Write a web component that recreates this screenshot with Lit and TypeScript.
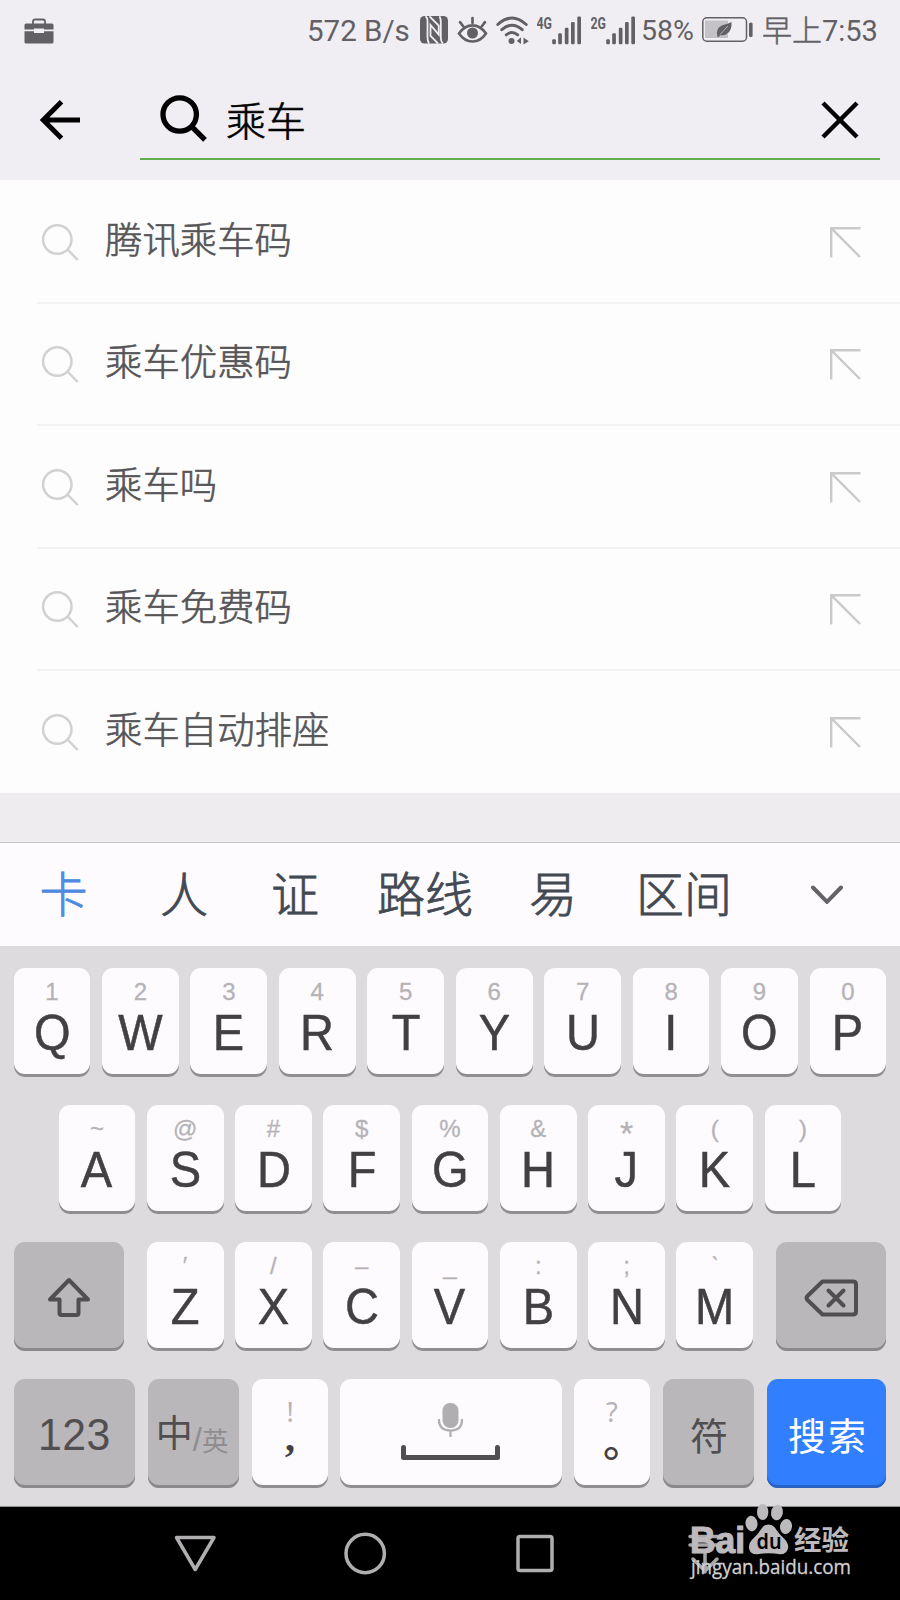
import { LitElement, html, css, svg } from "lit";
import { customElement, property } from "lit/decorators.js";
import { classMap } from "lit/directives/class-map.js";

const CJK = css`"Noto Sans CJK SC", sans-serif`;

@customElement("status-bar")
class StatusBar extends LitElement {
  static styles = css`
    :host { display: flex; align-items: center; height: 60px; padding: 0 21px 0 24px; box-sizing: border-box; color: #626064; font: 29.5px/60px Roboto, ${CJK}; white-space: nowrap; }
    svg { display: block; flex: none; }
    .case { margin-right: auto; margin-top: 2px; }
    .speed { width: 113px; padding-top: 2px; }
    .nfc { margin-right: 9px; }
    .eye { margin-right: 8px; }
    .wifi { margin-right: 8px; }
    .sig { margin-right: 10px; }
    .last { margin-right: 6px; }
    .pct { width: 61px; padding-top: 2px; font-size: 28.5px; }
    .batt { margin-right: 9px; }
    .time { width: 117px; padding-top: 2px; font-size: 29px; display: flex; }
    .zh { font: 300 30px/54px ${CJK}; -webkit-text-stroke: .5px #626064; }
  `;
  signal(label: string, cls: string) {
    return html`<svg class=${cls} width="44" height="30" viewBox="0 0 44 30" fill="#626064">
      <text x="-.5" y="13.500" font-family="Roboto" font-weight="700" font-size="16.500" textLength="15.500" lengthAdjust="spacingAndGlyphs">${label}</text>
      ${[[15.2, 24.3], [21.2, 18.3], [27.8, 12.7], [34, 7], [40.3, 1.5]].map(([x, y]) => svg`<rect x=${x} y=${y} width="3.7" height=${29.3 - y} rx="1.2"/>`)}
    </svg>`;
  }
  render() {
    return html`
      <svg class="case" width="30" height="28" viewBox="0 0 30 28"><path d="M9 7V4.500q0-2 2-2h8q2 0 2 2V7" fill="none" stroke="#626064" stroke-width="1.800"/><path d="M2 6.500h26q1.500 0 1.500 1.500v4.500H20v-1H10v1H.5V8Q.5 6.500 2 6.500ZM.5 14.300H10V16h10v-1.700h9.500V25q0 1.500-1.500 1.500H2Q.5 26.500.5 25Z" fill="#626064"/></svg>
      <span class="speed">572 B/s</span>
      <svg class="nfc" width="28" height="28" viewBox="0 0 28 28"><rect width="28" height="27.500" rx="4.500" fill="#626064"/><path d="M5.500.3Q7.800 2 7.500 5v16q0 4 1.500 6.500M19.500.3Q21 3 20.800 7v15q0 3 2 5.500M18 27.500L10.500 20V9L18.700 18.500V9.500L9.500 .3" fill="none" stroke="#f0eef3" stroke-width="1.800"/></svg>
      <svg class="eye" width="31" height="28" viewBox="0 0 30 28" fill="none" stroke="#626064" stroke-width="2.700" stroke-linecap="round"><path d="M1.500 17.500Q7 9.300 15 9.300t13.500 8.200Q23 25.500 15 25.500T1.500 17.500ZM15 7V2M5.500 10L2.500 6.200M24.500 10l3-3.800"/><circle cx="15" cy="17" r="5.500" fill="#626064" stroke="none"/></svg>
      <svg class="wifi" width="33" height="29" viewBox="0 0 33 29"><g fill="none" stroke="#626064" stroke-width="3" stroke-linecap="round"><path d="M1.800 8.500q14.200-13 28.400 0M5.800 13.700q10.200-9 20.400 0M10.300 18.800q5.700-4.700 11.400 0"/></g><circle cx="15.500" cy="25" r="3" fill="#626064"/><path d="M20.800 25l4.200-3.800V28ZM27.500 21.500l5.300 3.700-5.300 3.300Z" fill="#626064"/></svg>
      ${this.signal("4G", "sig")}
      ${this.signal("2G", "last")}
      <span class="pct">58%</span>
      <svg class="batt" width="51" height="26" viewBox="0 0 51 26"><rect x=".8" y=".8" width="43.700" height="23.400" rx="4" fill="none" stroke="#626064" stroke-width="1.500"/><rect x="3" y="3.500" width="23" height="17.500" fill="#c4c2c6"/><path d="M15.500 20Q13 10.500 21 8q5-.8 8.500-3Q30 12 26.500 15.500q-3.500 3.500-8 2.500l-2 2Z" fill="#626064"/><path d="M18 17.500L26 9" stroke="#c4c2c6" stroke-width=".8"/><rect x="47" y="5.500" width="3.600" height="14.500" rx="1.500" fill="#626064"/></svg>
      <span class="time"><span class="zh">早上</span><span>7:53</span></span>
    `;
  }
}

@customElement("search-bar")
class SearchBar extends LitElement {
  static styles = css`
    :host { display: flex; height: 120px; padding: 0 20px 20px 40px; box-sizing: border-box; align-items: stretch; }
    .back { align-self: center; margin: 20px 60px 0 0; flex: none; }
    .field { flex: 1; display: flex; align-items: center; border-bottom: 2px solid #62ac50; padding: 18px 21px 0 20px; box-sizing: border-box; }
    .query { flex: 1; margin: 0 0 0 19px; color: #000; font: 300 40px/60px ${CJK}; padding-top: 2px; -webkit-text-stroke: .6px #000; }
    .clear { margin-top: 4px; }
  `;
  render() {
    return html`
      <svg class="back" width="40" height="40" viewBox="0 0 40 40" fill="none" stroke="#000" stroke-width="5"><path d="M40 20H4M21.500 1.800L3.300 20l18.200 18.200"/></svg>
      <div class="field">
        <svg width="47" height="47" viewBox="0 0 47 47" fill="none" stroke="#000" stroke-width="5.300"><circle cx="19.700" cy="19.500" r="16.700"/><path d="M31.500 31.300L45 44.800"/></svg>
        <span class="query">乘车</span>
        <svg class="clear" width="38" height="38" viewBox="0 0 38 38" stroke="#000" stroke-width="4.500"><path d="M2 2l34 34M36 2L2 36"/></svg>
      </div>
    `;
  }
}

@customElement("suggestion-row")
class SuggestionRow extends LitElement {
  @property() text = "";
  @property({ type: Boolean }) last = false;
  static styles = css`
    :host { display: block; height: 122.500px; padding-left: 37px; box-sizing: border-box; }
    .row { height: 123.500px; box-sizing: border-box; display: flex; align-items: center; border-bottom: 2px solid #f2f1f3; padding: 2px 39px 0 4px; }
    .end { border-bottom-color: transparent; }
    .text { flex: 1; margin: -8px 0 0 26px; color: #565557; font: 300 37.400px/60px ${CJK}; -webkit-text-stroke: .6px #565557; }
  `;
  render() {
    return html`<div class=${classMap({ row: true, end: this.last })}>
      <svg width="38" height="38" viewBox="0 0 38 38" fill="none" stroke="#d2d0d3" stroke-width="2.500"><circle cx="16.300" cy="16.500" r="14.200"/><path d="M26.500 26.500L36.700 37"/></svg>
      <span class="text">${this.text}</span>
      <svg width="32" height="32" viewBox="0 0 32 32" fill="none" stroke="#cbcacb" stroke-width="2.400"><path d="M31.500 2.200H2.200V31.500M2.200 2.200L31 31"/></svg>
    </div>`;
  }
}

@customElement("key-cap")
class KeyCap extends LitElement {
  @property() label = "";
  @property() hint = "";
  @property() tone = "light";
  static styles = css`
    :host { display: block; flex: 0 0 auto; width: 76.800px; height: 109px; }
    .cap { height: 100%; box-sizing: border-box; border-radius: 11px; background: #fdfbfe; box-shadow: inset 0 -3px 0 #908e91; color: #424042; display: flex; flex-direction: column; align-items: center; font-family: "Liberation Sans", ${CJK}; }
    .dark { background: #b9b7ba; box-shadow: inset 0 -3px 0 #8a888b; justify-content: center; color: #504e51; padding-top: 4px; }
    .blue { background: #317eff; box-shadow: inset 0 -3px 0 #2a62c4; justify-content: center; color: #fff; padding-top: 4px; }
    .hint { height: 24px; margin-top: 11.500px; font-size: 24px; line-height: 25px; color: #b5b3b6; -webkit-text-stroke: .3px #b5b3b6; }
    .label { font-size: 49.500px; line-height: 59px; transform: scaleX(.95); -webkit-text-stroke: .5px #424042; }
    .star { font-size: 34px; line-height: 35px; }
  `;
  render() {
    return html`<div class=${classMap({ cap: true, dark: this.tone === "dark", blue: this.tone === "blue" })}>
      ${this.hint ? html`<span class=${classMap({ hint: true, star: this.hint === "*" })}>${this.hint}</span>` : ""}
      ${this.label ? html`<span class="label">${this.label}</span>` : ""}
      <slot></slot>
    </div>`;
  }
}

@customElement("soft-keyboard")
class SoftKeyboard extends LitElement {
  static styles = css`
    :host { display: flex; flex-direction: column; gap: 28px; height: 561px; padding: 22px 13.500px 0; box-sizing: border-box; background: #dddbde; border-bottom: 1px solid #8d8b8e; }
    .row { display: flex; justify-content: space-between; }
    .second { padding: 0 45px; }
    .third { gap: 11.500px; justify-content: center; }
    .fn { width: 110.500px; }
    .shift { margin-right: 11px; }
    .del { margin-left: 11px; }
    .num { width: 121px; }
    .mid { width: 91px; }
    .space { width: 222px; margin: 0 -1.500px; }
    .search { width: 119px; }
    .n123 { font-size: 45px; line-height: 60px; letter-spacing: .5px; transform: scaleX(.95); }
    .lang { display: flex; align-items: baseline; font: 400 37px/60px ${CJK}; white-space: nowrap; margin: -3px 0 0 -2px; }
    .small { font: 400 26.500px/60px ${CJK}; color: #8f8d90; position: relative; top: 4px; }
    .slash { font: 400 33px/40px "Liberation Sans", sans-serif; color: #8f8d90; position: relative; top: 4px; }
    .fu { font: 400 38px/60px ${CJK}; margin-top: -3px; }
    .go { font: 400 38px/60px ${CJK}; letter-spacing: 2px; margin: -3px 0 0 2px; }
    .punct { display: flex; flex-direction: column; align-items: center; padding-top: 18px; }
    .mark { font: 400 27px/30px "Noto Sans", sans-serif; color: #b5b3b6; }
    .comma { font: 700 40px/34px "Liberation Serif", serif; color: #424042; margin-top: -6px; }
    .stop { font: 500 42px/34px ${CJK}; color: #424042; margin: -5px 0 0 24px; }
    .spacer { margin-top: 24px; }
  `;
  keys(labels: string, hints: string) {
    return [...labels].map((l, i) => html`<key-cap label=${l} hint=${[...hints][i]}></key-cap>`);
  }
  render() {
    return html`
      <div class="row">${this.keys("QWERTYUIOP", "1234567890")}</div>
      <div class="row second">${this.keys("ASDFGHJKL", "~@#$%&*()")}</div>
      <div class="row third">
        <key-cap class="fn shift" tone="dark"><svg width="44" height="42" viewBox="0 0 44 42" fill="none" stroke="#504e51" stroke-width="4" stroke-linejoin="round"><path d="M22 3L3 22.500h9.500V36q0 2 2 2h15q2 0 2-2V22.500H41Z"/></svg></key-cap>
        ${this.keys("ZXCVBNM", "′/–_:;ˋ")}
        <key-cap class="fn del" tone="dark"><svg width="55" height="40" viewBox="0 0 55 40" fill="none" stroke="#504e51" stroke-width="4" stroke-linejoin="round" stroke-linecap="round"><path d="M18.500 3.500H49q3 0 3 3v27q0 3-3 3H18.500L3.500 22q-2-2 0-4ZM24.500 12.500l15 15M39.500 12.500l-15 15"/></svg></key-cap>
      </div>
      <div class="row">
        <key-cap class="num" tone="dark"><span class="n123">123</span></key-cap>
        <key-cap class="mid" tone="dark"><span class="lang">中<span class="slash">/</span><span class="small">英</span></span></key-cap>
        <key-cap><div class="punct"><span class="mark">!</span><span class="comma">,</span></div></key-cap>
        <key-cap class="space"><svg class="spacer" width="102" height="60" viewBox="0 0 102 60"><rect x="42.500" y="0" width="16" height="25" rx="7.500" fill="#b0aeb1"/><g fill="none" stroke="#b0aeb1" stroke-width="2.200"><path d="M39 16v1q0 10.500 11.500 10.500T62 17v-1M50.500 27.500V34"/></g><path d="M3.500 44.500v10h94v-10" fill="none" stroke="#504e51" stroke-width="5" stroke-linecap="round" stroke-linejoin="round"/></svg></key-cap>
        <key-cap><div class="punct"><span class="mark">?</span><span class="stop">。</span></div></key-cap>
        <key-cap class="mid" tone="dark"><span class="fu">符</span></key-cap>
        <key-cap class="search" tone="blue"><span class="go">搜索</span></key-cap>
      </div>
    `;
  }
}

@customElement("app-root")
class AppRoot extends LitElement {
  static styles = css`
    :host { display: flex; flex-direction: column; width: 900px; height: 1600px; overflow: hidden; position: relative; background: #eeecef; }
    .head { background: #f0eef3; }
    .list { background: #fefdfe; height: 612.500px; }
    .gap { height: 50px; box-sizing: border-box; border-bottom: 1.500px solid #c9c7ca; }
    .candidates { display: grid; grid-template-columns: 127px 114px 108px 152px 104px 158px 128px; height: 103px; background: #fdfbfe; color: #434952; font: 300 48px/99px ${CJK}; text-align: center; align-items: center; justify-items: center; }
    .candidates span { margin-top: -5px; -webkit-text-stroke: .8px currentColor; }
    .picked { color: #4f8ae0; }
    .nav { flex: 1; background: #000; display: flex; align-items: center; padding: 0 0 0 174px; gap: 127px; }
    .brand { position: absolute; left: 680px; top: 1495px; }
  `;
  render() {
    const rows = ["腾讯乘车码", "乘车优惠码", "乘车吗", "乘车免费码", "乘车自动排座"];
    const words = ["卡", "人", "证", "路线", "易", "区间"];
    return html`
      <div class="head"><status-bar></status-bar><search-bar></search-bar></div>
      <div class="list">${rows.map((r, i) => html`<suggestion-row text=${r} ?last=${i === rows.length - 1}></suggestion-row>`)}</div>
      <div class="gap"></div>
      <div class="candidates">
        ${words.map((w, i) => html`<span class=${classMap({ picked: i === 0 })}>${w}</span>`)}
        <svg width="34" height="20" viewBox="0 0 34 20" fill="none" stroke="#646266" stroke-width="4" stroke-linecap="round"><path d="M3 3.500l14 14.300L31 3.500"/></svg>
      </div>
      <soft-keyboard></soft-keyboard>
      <div class="nav">
        <svg width="43" height="43" viewBox="0 0 43 43" fill="none" stroke="#b0aeb0" stroke-width="3.500" stroke-linejoin="round"><path d="M2.500 5.500h37.500L21.200 37.500Z"/></svg>
        <svg width="43" height="43" viewBox="0 0 43 43" fill="none" stroke="#b0aeb0" stroke-width="3.500"><circle cx="21.200" cy="21.500" r="19.200"/></svg>
        <svg width="43" height="43" viewBox="0 0 43 43" fill="none" stroke="#b0aeb0" stroke-width="3.500"><rect x="4" y="4.500" width="34" height="34" rx="2"/></svg>
      </div>
      <svg class="brand" width="180" height="95" viewBox="0 0 180 95">
        <g fill="none" stroke="#a9a7a9" stroke-width="3.500" stroke-linecap="round"><path d="M10 41.500h30M10 50h30M25 58v19M13 64l12 12 12-12"/></g>
        <g fill="#bcbabc">
          <text x="10" y="57.500" font-family="Liberation Sans" font-weight="700" font-size="36" textLength="55" lengthAdjust="spacingAndGlyphs" stroke="#bcbabc" stroke-width="1.200">Bai</text>
          <ellipse cx="71.500" cy="28.500" rx="6" ry="7.700" transform="rotate(-8 71.500 28.500)"/>
          <ellipse cx="82.700" cy="17" rx="5.700" ry="8"/>
          <ellipse cx="97" cy="17.500" rx="5.900" ry="7.800" transform="rotate(10 97 17.500)"/>
          <ellipse cx="106" cy="31.500" rx="6" ry="7.500" transform="rotate(8 106 31.500)"/>
          <path d="M88.500 29.500q5 0 8 5.500 2.500 4 7 8 5.500 5 4.500 10.500-1.500 6-8 5.800-5-1-11.500-1t-11.500 1q-7 .2-8-6-.500-5.500 4.500-10 4.500-4 7-8.300 3-5.500 8-5.500Z"/>
          <text x="114" y="54.500" font-family="Noto Sans CJK SC" font-weight="700" font-size="27" textLength="55" lengthAdjust="spacingAndGlyphs">经验</text>
        </g>
        <text x="76.500" y="54" font-family="Noto Sans" font-weight="600" font-size="22" fill="#000" textLength="25" lengthAdjust="spacingAndGlyphs">du</text>
        <text x="11" y="79" font-family="Open Sans" font-weight="400" font-size="20" fill="#d2d0d2" stroke="#d2d0d2" stroke-width=".3" textLength="160" lengthAdjust="spacingAndGlyphs">jingyan.baidu.com</text>
      </svg>
    `;
  }
}
